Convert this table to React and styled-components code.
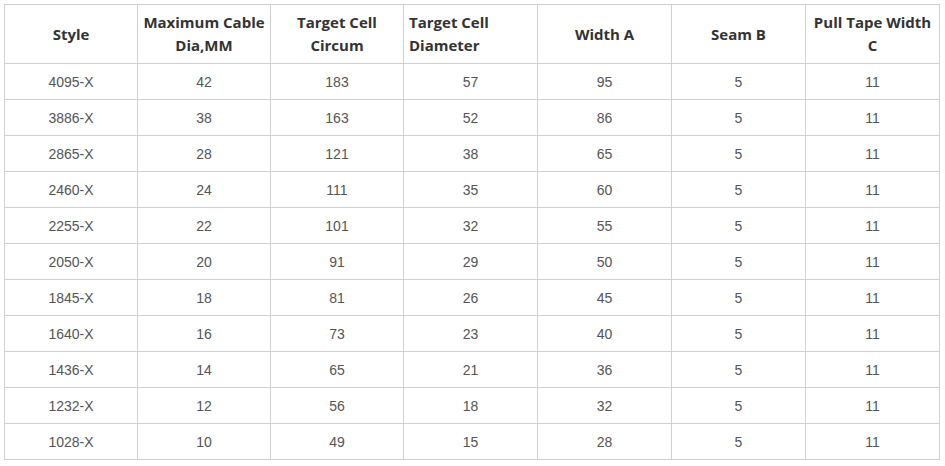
import React from "react";
import styled, { createGlobalStyle } from "styled-components";

const Global = createGlobalStyle`
  html, body { margin: 0; padding: 0; background: #fff; }
  body { font-family: "Liberation Sans", Arial, sans-serif; }
`;

const Wrap = styled.div`
  padding: 4px 0 0 4px;
`;

const Table = styled.table`
  border-collapse: collapse;
  table-layout: fixed;
  width: 936px;
`;

const Col = styled.col`
  width: ${(p) => p.$w}px;
`;

const Th = styled.th`
  border: 1px solid #d0d0d0;
  height: 58px;
  padding: ${(p) => (p.$align === "left" ? "0 4px 0 5px" : "0 3px")};
  font-family: "Open Sans", "Noto Sans", sans-serif;
  font-weight: 700;
  font-size: 15px;
  line-height: 23px;
  color: #333;
  text-align: ${(p) => p.$align || "center"};
  vertical-align: middle;
`;

const Td = styled.td`
  border: 1px solid #d0d0d0;
  height: 35px;
  padding: 0 6px;
  font-family: "Liberation Sans", Arial, sans-serif;
  font-size: 14px;
  color: #555;
  text-align: center;
  vertical-align: middle;
`;

const widths = [133, 133, 133, 134, 134, 134, 134];

const headers = [
  { t: "Style" },
  { t: "Maximum Cable Dia,MM" },
  { t: "Target Cell Circum" },
  { t: "Target Cell Diameter", align: "left" },
  { t: "Width A" },
  { t: "Seam B" },
  { t: "Pull Tape Width C" },
];

const rows = [
  ["4095-X", 42, 183, 57, 95, 5, 11],
  ["3886-X", 38, 163, 52, 86, 5, 11],
  ["2865-X", 28, 121, 38, 65, 5, 11],
  ["2460-X", 24, 111, 35, 60, 5, 11],
  ["2255-X", 22, 101, 32, 55, 5, 11],
  ["2050-X", 20, 91, 29, 50, 5, 11],
  ["1845-X", 18, 81, 26, 45, 5, 11],
  ["1640-X", 16, 73, 23, 40, 5, 11],
  ["1436-X", 14, 65, 21, 36, 5, 11],
  ["1232-X", 12, 56, 18, 32, 5, 11],
  ["1028-X", 10, 49, 15, 28, 5, 11],
];

export default function App() {
  return (
    <Wrap>
      <Global />
      <Table>
        <colgroup>
          {widths.map((w, i) => (
            <Col key={i} $w={w} />
          ))}
        </colgroup>
        <thead>
          <tr>
            {headers.map((h) => (
              <Th key={h.t} $align={h.align}>
                {h.t}
              </Th>
            ))}
          </tr>
        </thead>
        <tbody>
          {rows.map((r) => (
            <tr key={r[0]}>
              {r.map((c, i) => (
                <Td key={i}>{c}</Td>
              ))}
            </tr>
          ))}
        </tbody>
      </Table>
    </Wrap>
  );
}
